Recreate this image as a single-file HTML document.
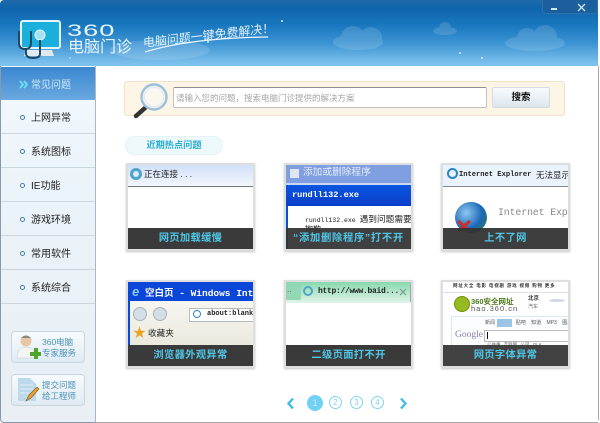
<!DOCTYPE html>
<html lang="zh"><head><meta charset="utf-8"><style>
html,body{margin:0;padding:0;background:#fff}
#w{position:relative;width:600px;height:423px;overflow:hidden;background:#fff;font-family:"Liberation Sans","Noto Sans CJK SC",sans-serif;filter:blur(.3px)}
#w div,#w span{position:absolute;white-space:nowrap}
#w i{font-style:normal}
.hd{left:0;top:0;width:598px;height:66px;background:linear-gradient(#1f69a9 0,#0f65ad 12%,#1a78bf 38%,#3b93d3 65%,#7cc0ec 96%);border-radius:4px 4px 0 0}
.it{left:1px;width:94px;height:33px;border-bottom:1px solid #ccd6df}
.it b{position:absolute;left:19px;top:15px;width:3px;height:3px;border:1.5px solid #3d7cb4;border-radius:50%;background:#fff}
.it span{left:30px;top:12px;font-size:10px;line-height:14px;color:#222}
.card{width:125px;height:84px;border:2px solid #dedede;background:#fff;overflow:hidden;box-shadow:0 1px 2px #c4c4c4}
.bar{left:0;bottom:0;width:100%;height:21px;background:rgba(52,52,52,.97);color:#4fc6e6;font-size:10.3px;line-height:22px;text-align:center;font-weight:bold;letter-spacing:.3px}
.pg{width:11px;height:11px;border:1.5px solid #7fd4ee;border-radius:50%;color:#7fd4ee;font-size:8px;line-height:11px;text-align:center}
.sb{left:11px;width:72px;height:30px;border:1px solid #c9d6e0;border-radius:4px;background:linear-gradient(#f7fbfd,#deeaf2)}
.sb span{left:30px;font-size:8.5px;line-height:11px;color:#4f93b8}
</style></head><body><div id="w">
<div class="hd"></div>
<svg style="position:absolute;left:0;top:0" width="600" height="66">
<g fill="#fff" opacity=".13">
<ellipse cx="358" cy="42" rx="25" ry="8"/><circle cx="353" cy="38" r="12"/><circle cx="371" cy="38" r="11"/>
<ellipse cx="445" cy="31" rx="12" ry="4"/><circle cx="445" cy="28" r="6"/>
<ellipse cx="535" cy="43" rx="30" ry="8"/><circle cx="527" cy="38" r="10"/><circle cx="545" cy="37" r="12"/>
<ellipse cx="160" cy="50" rx="50" ry="10"/>
</g>
<g fill="#cfeeff"><circle cx="460" cy="53" r="1"/><circle cx="482" cy="58" r="1"/><circle cx="282" cy="21" r="1"/><circle cx="208" cy="42" r="1"/><circle cx="70" cy="58" r=".8"/></g>
<path d="M145 52 Q190 38 268 37" stroke="#e9f6ff" stroke-width="1.3" fill="none"/>
<path d="M26 50 L52 50 L54 56 L24 56Z" fill="#dfeaf0"/>
<rect x="21" y="21" width="39" height="27" rx="2" fill="#1bb0dc" stroke="#e3f4f9" stroke-width="2"/>
<circle cx="40" cy="35" r="5" fill="#a6dff0" stroke="#e6f7fc"/>
<path d="M40 40 V54 Q40 58 33 58 Q26 58 26 53 V48 M19 31 V43 Q19 49 25 49 Q31 49 31 43 V31" stroke="#1e4560" stroke-width="1.9" fill="none"/>
</svg>
<div style="left:67px;top:21px;font-size:16.5px;line-height:20px;color:#e6f5fc;letter-spacing:.6px;transform:scaleX(1.65);transform-origin:0 0">360</div>
<div style="left:68px;top:39px;font-size:16px;line-height:17px;color:#e6f5fc">电脑门诊</div>
<div style="left:143px;top:36px;font-size:12px;line-height:14px;color:#dff1fb;transform:rotate(-6.5deg) skewX(-6deg);transform-origin:0 50%">电脑问题一键免费解决！</div>
<div style="left:542px;top:0;width:54px;height:13px;background:#1b5f9c;border-radius:0 0 4px 4px;border:1px solid #2b73ad;border-top:0"></div>
<div style="left:551px;top:8px;width:6px;height:1.5px;background:#cfe6f5"></div>
<svg style="position:absolute;left:577px;top:3px" width="9" height="9"><path d="M1 1L8 8M8 1L1 8" stroke="#cfe6f5" stroke-width="1.3"/></svg>

<div style="left:0;top:66px;width:96px;height:357px;background:linear-gradient(#f2f9fd 0,#eaf3f9 40%,#e9eff4 100%);border-right:1px solid #a9b8c6;border-left:1px solid #8a99a8;box-sizing:border-box;border-bottom:1px solid #8a99a8;border-radius:0 0 0 4px"></div>
<div style="left:1px;top:67px;width:94px;height:33px;background:linear-gradient(#3b88d0,#6aa9e0)"></div>
<svg style="position:absolute;left:19px;top:80px" width="10" height="9"><path d="M1 1L4 4.5L1 8M5 1L8 4.5L5 8" stroke="#6fe0f8" stroke-width="1.8" fill="none"/></svg>
<div style="left:31px;top:79px;font-size:10px;line-height:14px;color:#cfe9f7">常见问题</div>
<div class="it" style="top:100px"><b></b><span>上网异常</span></div>
<div class="it" style="top:134px"><b></b><span>系统图标</span></div>
<div class="it" style="top:168px"><b></b><span>IE功能</span></div>
<div class="it" style="top:202px"><b></b><span>游戏环境</span></div>
<div class="it" style="top:236px"><b></b><span>常用软件</span></div>
<div class="it" style="top:270px"><b></b><span>系统综合</span></div>

<div class="sb" style="top:331px"><span style="top:5px">360电脑</span><span style="top:16px">专家服务</span></div>
<svg style="position:absolute;left:15px;top:332px" width="26" height="30">
<circle cx="11" cy="9" r="5.5" fill="#e9c7a4"/><path d="M6 6 Q11 1 16 6Z" fill="#8a8a80"/>
<path d="M2 26 Q2 15 11 15 Q20 15 20 26Z" fill="#f3f5f5" stroke="#c5ccd0" stroke-width=".5"/>
<path d="M15 20h4v-4h4v4h3v4h-3v3h-4v-3h-4z" fill="#4ca42a"/>
</svg>
<div class="sb" style="top:374px"><span style="top:5px">提交问题</span><span style="top:16px">给工程师</span></div>
<svg style="position:absolute;left:17px;top:378px" width="24" height="25">
<path d="M1 0H13L19 6V23H1Z" fill="#bcd9ec"/><path d="M3 7H16M3 11H16M3 15H12" stroke="#e2f0f8"/>
<path d="M9 23L12 17L20 9L22 11L14 20Z" fill="#e8a02c" stroke="#7a5514" stroke-width=".6"/>
</svg>

<div style="left:124px;top:81px;width:439px;height:33px;background:#fcf5e6;border:1px solid #f0e3c8;border-radius:3px"></div>
<div style="left:173px;top:87px;width:312px;height:19px;background:#fff;border:1px solid #c2c2c2;border-top:1px solid #8f8f8f;border-radius:2px;font-size:8.5px;line-height:20px;color:#a6a6a6;text-indent:2px">请输入您的问题，搜索电脑门诊提供的解决方案</div>
<div style="left:492px;top:87px;width:56px;height:19px;background:linear-gradient(#f8fbfc,#dbe6ec);border:1px solid #d3dce2;border-radius:2px;font-size:9.5px;line-height:20px;text-align:center;font-weight:bold;color:#111">搜索</div>
<svg style="position:absolute;left:130px;top:80px" width="45" height="42">
<path d="M6 36L15 28" stroke="#333" stroke-width="4.5" stroke-linecap="round"/>
<circle cx="24" cy="17" r="12.5" fill="#f5f2ec" stroke="#9dc0dc" stroke-width="2.4"/>
<circle cx="24" cy="17" r="9.5" fill="#fbf7ee" stroke="#dcebf5"/>
</svg>

<div style="left:125px;top:136px;width:96px;height:17px;background:#eef9fc;border:1px solid #e3f3f8;border-radius:10px;font-size:9.2px;line-height:17px;text-align:center;color:#25abcf;font-weight:bold">近期热点问题</div>

<div class="card" style="left:126px;top:163px">
<div style="left:0;top:0;width:127px;height:21px;background:linear-gradient(#cfe0f7,#f3f7fd)"></div>
<div style="left:0;top:21px;width:127px;height:1px;background:#777"></div>
<div style="left:2px;top:3px;width:6px;height:6px;border:3px solid #4fa5c8;border-radius:50%"></div>
<div style="left:16px;top:3px;font-size:8.5px;line-height:12px;color:#222">正在连接 . . .</div>
<div class="bar">网页加载缓慢</div></div>

<div class="card" style="left:284px;top:163px">
<div style="left:0;top:0;width:127px;height:20px;background:#c8d8f5"></div>
<div style="left:0;top:0;width:127px;height:18px;background:#7f9fe0"></div>
<div style="left:17px;top:2px;font-size:9.7px;line-height:12px;color:#e5ecfb">添加或删除程序</div>
<div style="left:4px;top:4px;width:9px;height:9px;background:#dfe7f5"></div>
<div style="left:0;top:20px;width:125px;height:65px;background:#fff;border-left:2px solid #0a4fd8"></div>
<div style="left:0;top:20px;width:127px;height:21px;background:linear-gradient(#0a55e0,#0a3fc8);border-radius:3px 0 0 0"></div>
<div style="left:6px;top:25px;font:bold 8.6px 'Liberation Mono',monospace;line-height:11px;color:#fff">rundll132.exe</div>
<div style="left:19px;top:49px;font:6.5px 'Liberation Mono','Noto Sans CJK SC',monospace;line-height:10px;color:#222">rundll132.exe <i style="font-size:8.7px;font-family:'Liberation Sans','Noto Sans CJK SC',sans-serif">遇到问题需要</i></div>
<div style="left:19px;top:60px;font-size:8px;line-height:10px;color:#222">抱歉。</div>
<div class="bar" style="background:rgba(52,52,52,.94);letter-spacing:.7px">“添加删除程序”打不开</div></div>

<div class="card" style="left:441px;top:163px">
<div style="left:0;top:0;width:127px;height:21px;background:#eaf2fb"></div>
<div style="left:0;top:21px;width:127px;height:1px;background:#888"></div>
<div style="left:4px;top:3px;width:7px;height:7px;border:2px solid #2b85c9;border-radius:50%"></div>
<div style="left:16px;top:5px;font:bold 7.1px 'Liberation Mono',monospace;line-height:11px;color:#222">Internet Explorer</div>
<div style="left:93px;top:5px;font-size:8.5px;line-height:11px;color:#222">无法显示</div>
<div style="left:12px;top:37px;width:32px;height:31px;border-radius:50%;background:radial-gradient(circle at 35% 35%,#8ec8ef,#1c67b8 55%,#2f8a2e)"></div>
<div style="left:55px;top:42px;font:10px 'Liberation Mono',monospace;line-height:14px;color:#8a8a8a;letter-spacing:-.2px">Internet Exp</div>
<svg style="position:absolute;left:12px;top:54px" width="18" height="14"><path d="M3 2L15 12M15 2L3 12" stroke="#c8312a" stroke-width="3"/></svg>
<div class="bar" style="background:rgba(52,52,52,.95)">上不了网</div></div>

<div class="card" style="left:126px;top:280px">
<div style="left:0;top:0;width:127px;height:19px;background:#0a46d8"></div>
<div style="left:4px;top:3px;font-size:13px;line-height:14px;color:#8ecaf0;font-style:italic;font-weight:bold">e</div>
<div style="left:17px;top:5px;font:bold 9.5px 'Liberation Mono','Noto Sans CJK SC',monospace;line-height:13px;color:#fff">空白页 - Windows Int</div>
<div style="left:0;top:19px;width:127px;height:44px;background:linear-gradient(#f6f6f0,#ebe8de)"></div>
<div style="left:0;top:19px;width:2px;height:44px;background:#0a46d8"></div>
<div style="left:5px;top:25px;width:12px;height:12px;border:1.5px solid #a9b2bb;border-radius:50%;background:#d5dde6"></div>
<div style="left:25px;top:25px;width:12px;height:12px;border:1.5px solid #a9b2bb;border-radius:50%;background:#d5dde6"></div>
<div style="left:61px;top:26px;width:66px;height:12px;background:#fff;border:1px solid #b7bcc0"></div>
<div style="left:79px;top:27px;font:bold 7px 'Liberation Mono',monospace;line-height:11px;color:#222">about:blank</div>
<div style="left:65px;top:28px;width:6px;height:6px;border-radius:50%;border:1.5px solid #2b85c9"></div>
<div style="left:5px;top:44px;font-size:13px;line-height:14px;color:#e8a420">★</div>
<div style="left:20px;top:46px;font-size:8.6px;line-height:11px;color:#222">收藏夹</div>
<div class="bar">浏览器外观异常</div></div>

<div class="card" style="left:284px;top:280px">
<div style="left:0;top:0;width:127px;height:21px;background:linear-gradient(#87d8ae,#e2f5ea)"></div>
<div style="left:0;top:1px;width:15px;height:17px;background:#93d7b5;border-radius:0 2px 2px 0;font-size:8px;line-height:14px;color:#555;text-indent:1px">..</div>
<div style="left:17px;top:4px;width:6px;height:6px;border:2.5px solid #4fa5c8;border-radius:50%"></div>
<div style="left:32px;top:4px;font:bold 8px 'Liberation Mono',monospace;line-height:12px;color:#222;letter-spacing:-.3px">http://www.baid...</div>
<svg style="position:absolute;left:113px;top:6px" width="8" height="8"><path d="M1 1L7 7M7 1L1 7" stroke="#7d9a8c" stroke-width="1.2"/></svg>
<div style="left:124px;top:2px;width:1px;height:18px;background:#9aa"></div>
<div class="bar">二级页面打不开</div></div>

<div class="card" style="left:441px;top:280px">
<div style="left:10px;top:0px;font-size:4.5px;line-height:7px;color:#333;font-weight:bold;letter-spacing:.8px">网址大全 电影 电视剧 游戏 视频 购物 更多</div>
<div style="left:0;top:10px;width:127px;height:1px;background:#dde"></div>
<div style="left:11px;top:14px;width:14px;height:14px;border-radius:50%;background:#97bb1f;border:1px solid #6d8f10"></div>
<div style="left:28px;top:15px;font-size:7.5px;line-height:9px;color:#4b7a1c;font-weight:bold">360安全网址</div>
<div style="left:28px;top:22px;font-size:7.5px;line-height:9px;color:#555;letter-spacing:1px">hao.360.cn</div>
<div style="left:85px;top:14px;font-size:5.5px;line-height:7px;color:#333;font-weight:bold">北京</div>
<div style="left:85px;top:22px;font-size:5px;line-height:7px;color:#666">汽车</div>
<div style="left:106px;top:17px;width:16px;height:3px;background:#cfd8e2;border-radius:50%"></div>
<div style="left:8px;top:34px;width:119px;height:50px;border:1px solid #dfe8f2;border-right:0;background:#fcfdff"></div>
<div style="left:42px;top:38px;font-size:5px;line-height:7px;color:#555;word-spacing:4px">新闻 网页 贴吧 知道 MP3 图片</div>
<div style="left:54px;top:37px;width:15px;height:8px;background:#9cc4e6"></div>
<div style="left:12px;top:47px;font:9.5px 'Liberation Serif',serif;line-height:12px;color:#8b7fb0">Google</div>
<div style="left:41px;top:48px;width:86px;height:10px;background:#fff;border:1px solid #b8b8b8"></div>
<div style="left:44px;top:50px;width:1px;height:7px;background:#111"></div>
<div style="left:44px;top:60px;font-size:4.5px;line-height:6px;color:#666;word-spacing:2px">公共事 互联网 公司 OLK</div>
<div class="bar" style="background:rgba(52,52,52,.93)">网页字体异常</div></div>

<svg style="position:absolute;left:286px;top:397px" width="122" height="13"><path d="M7 1.5L2.5 6.5L7 11.5" stroke="#3fbde6" stroke-width="2.4" fill="none"/><path d="M115 1.5L119.5 6.5L115 11.5" stroke="#3fbde6" stroke-width="2.4" fill="none"/></svg>
<div style="left:307px;top:395px;width:16px;height:16px;border-radius:50%;background:#6fd2f3;color:#cfeffa;font-size:9px;line-height:16px;text-align:center">1</div>
<div class="pg" style="left:329px;top:396px">2</div>
<div class="pg" style="left:350px;top:396px">3</div>
<div class="pg" style="left:371px;top:396px">4</div>

<div style="left:598px;top:66px;width:1px;height:354px;background:#a8a8a8"></div>
<div style="left:96px;top:422px;width:502px;height:1px;background:#a8a8a8"></div>
</div></body></html>
